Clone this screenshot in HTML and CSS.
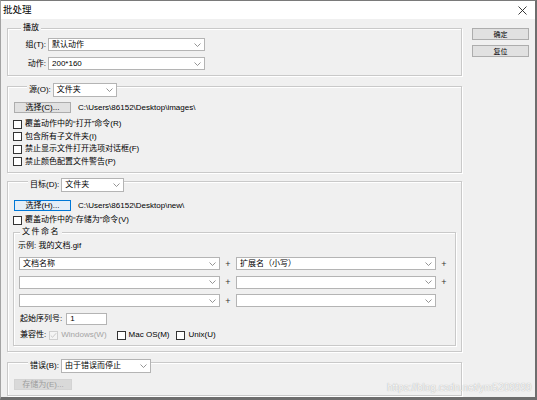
FILE: index.html
```html
<!DOCTYPE html>
<html lang="zh-CN">
<head>
<meta charset="utf-8">
<title>批处理</title>
<link rel="stylesheet" href="styles.css">
</head>
<body>
<div class="window">
  <div class="titlebar">
    <span class="title">批处理</span>
    <svg class="close" viewBox="0 0 9 9" width="9" height="9"><path d="M0.5 0.5 L8.5 8.5 M8.5 0.5 L0.5 8.5" stroke="#222" stroke-width="0.9" fill="none"/></svg>
  </div>
  <div class="body">
    <div class="main">
      <section class="group g-play">
        <div class="head head-text"><span class="legend">播放</span></div>
        <div class="frow first">
          <span class="flabel">组(T):</span>
          <div class="select w-play"><span>默认动作</span><svg class="chev" viewBox="0 0 7 4" width="7" height="4"><path d="M0.5 0.5 L3.5 3.5 L6.5 0.5" fill="none" stroke="#7a7a7a" stroke-width="0.8"/></svg></div>
        </div>
        <div class="frow second">
          <span class="flabel">动作:</span>
          <div class="select w-play"><span>200*160</span><svg class="chev" viewBox="0 0 7 4" width="7" height="4"><path d="M0.5 0.5 L3.5 3.5 L6.5 0.5" fill="none" stroke="#7a7a7a" stroke-width="0.8"/></svg></div>
        </div>
      </section>

      <section class="group g-source">
        <div class="head head-combo">
          <span class="legend">源(O):</span>
          <div class="select w-src"><span>文件夹</span><svg class="chev" viewBox="0 0 7 4" width="7" height="4"><path d="M0.5 0.5 L3.5 3.5 L6.5 0.5" fill="none" stroke="#7a7a7a" stroke-width="0.8"/></svg></div>
        </div>
        <div class="prow src-prow">
          <div class="btn">选择(C)...</div>
          <span class="path">C:\Users\86152\Desktop\images\</span>
        </div>
        <div class="checks">
          <div class="check"><span class="cb"></span><span>覆盖动作中的“打开”命令(R)</span></div>
          <div class="check"><span class="cb"></span><span>包含所有子文件夹(I)</span></div>
          <div class="check"><span class="cb"></span><span>禁止显示文件打开选项对话框(F)</span></div>
          <div class="check"><span class="cb"></span><span>禁止颜色配置文件警告(P)</span></div>
        </div>
      </section>

      <section class="group g-target">
        <div class="head head-combo">
          <span class="legend">目标(D):</span>
          <div class="select w-dst"><span>文件夹</span><svg class="chev" viewBox="0 0 7 4" width="7" height="4"><path d="M0.5 0.5 L3.5 3.5 L6.5 0.5" fill="none" stroke="#7a7a7a" stroke-width="0.8"/></svg></div>
        </div>
        <div class="prow dst-prow">
          <div class="btn focused">选择(H)...</div>
          <span class="path">C:\Users\86152\Desktop\new\</span>
        </div>
        <div class="check dst-check"><span class="cb"></span><span>覆盖动作中的“存储为”命令(V)</span></div>

        <section class="group g-naming">
          <div class="head head-text naming-head"><span class="legend spaced">文件命名</span></div>
          <div class="sample">示例: 我的文档.gif</div>
          <div class="nrow r1">
            <div class="select w-n1"><span>文档名称</span><svg class="chev" viewBox="0 0 7 4" width="7" height="4"><path d="M0.5 0.5 L3.5 3.5 L6.5 0.5" fill="none" stroke="#7a7a7a" stroke-width="0.8"/></svg></div>
            <span class="plus">+</span>
            <div class="select w-n2"><span>扩展名（小写）</span><svg class="chev" viewBox="0 0 7 4" width="7" height="4"><path d="M0.5 0.5 L3.5 3.5 L6.5 0.5" fill="none" stroke="#7a7a7a" stroke-width="0.8"/></svg></div>
            <span class="plus">+</span>
          </div>
          <div class="nrow">
            <div class="select w-n1"><span></span><svg class="chev" viewBox="0 0 7 4" width="7" height="4"><path d="M0.5 0.5 L3.5 3.5 L6.5 0.5" fill="none" stroke="#7a7a7a" stroke-width="0.8"/></svg></div>
            <span class="plus">+</span>
            <div class="select w-n2"><span></span><svg class="chev" viewBox="0 0 7 4" width="7" height="4"><path d="M0.5 0.5 L3.5 3.5 L6.5 0.5" fill="none" stroke="#7a7a7a" stroke-width="0.8"/></svg></div>
            <span class="plus">+</span>
          </div>
          <div class="nrow">
            <div class="select w-n1"><span></span><svg class="chev" viewBox="0 0 7 4" width="7" height="4"><path d="M0.5 0.5 L3.5 3.5 L6.5 0.5" fill="none" stroke="#7a7a7a" stroke-width="0.8"/></svg></div>
            <span class="plus">+</span>
            <div class="select w-n2"><span></span><svg class="chev" viewBox="0 0 7 4" width="7" height="4"><path d="M0.5 0.5 L3.5 3.5 L6.5 0.5" fill="none" stroke="#7a7a7a" stroke-width="0.8"/></svg></div>
          </div>
          <div class="seq-row">
            <span class="seq-label">起始序列号:</span>
            <div class="input">1</div>
          </div>
          <div class="compat-row">
            <span class="compat-label">兼容性:</span>
            <span class="cb disabled"><svg viewBox="0 0 9 9" width="7" height="7"><path d="M1 4.5 L3.3 6.8 L8 1.5" fill="none" stroke="#b8b8b8" stroke-width="0.9"/></svg></span>
            <span class="dim">Windows(W)</span>
            <span class="cb mac"></span><span>Mac OS(M)</span>
            <span class="cb unix"></span><span>Unix(U)</span>
          </div>
        </section>
      </section>

      <section class="group g-error">
        <div class="head head-combo">
          <span class="legend">错误(B):</span>
          <div class="select w-err"><span>由于错误而停止</span><svg class="chev" viewBox="0 0 7 4" width="7" height="4"><path d="M0.5 0.5 L3.5 3.5 L6.5 0.5" fill="none" stroke="#7a7a7a" stroke-width="0.8"/></svg></div>
        </div>
        <div class="prow err-prow">
          <div class="btn disabled-btn">存储为(E)...</div>
        </div>
      </section>
    </div>

    <div class="side">
      <div class="btn side-btn">确定</div>
      <div class="btn side-btn">复位</div>
    </div>
  </div>
  <div class="watermark">https://blog.csdn.net/ym5209999</div>
</div>
</body>
</html>
```

FILE: styles.css
```css
* { box-sizing: border-box; }

body {
  margin: 0;
  font-family: "Liberation Sans", "Noto Sans CJK SC", sans-serif;
  font-size: 8px;
  line-height: 10px;
  color: #000;
}

.window {
  position: relative;
  width: 537px;
  height: 400px;
  background: #f0f0f0;
  border-top: 1px solid #7a7a7a;
  border-left: 1px solid #a3a3a3;
  border-right: 2px solid #6e6e6e;
  border-bottom: 3px solid #6e6e6e;
}

.titlebar {
  height: 18px;
  background: #fff;
  display: flex;
  align-items: center;
  padding: 0 8px 0 2px;
}

.title {
  flex: 1;
  font-size: 9.5px;
  line-height: 12px;
}

.close { display: block; }

.body {
  display: flex;
  gap: 10px;
  padding: 9px 0 0 6px;
}

.main {
  width: 455px;
  display: flex;
  flex-direction: column;
}

.side {
  width: 57px;
  display: flex;
  flex-direction: column;
  gap: 5px;
}

/* group boxes */
.group {
  border: 1px solid #c9c9c9;
  box-shadow: 1px 1px 0 #fff, inset 1px 1px 0 #fff;
}

.g-play { height: 48px; }
.g-source { height: 87px; margin-top: 10px; }
.g-target { height: 171px; margin-top: 8px; }
.g-error { height: 34px; margin-top: 10px; }

.head {
  display: flex;
  align-items: center;
}

.head-text {
  height: 10px;
  margin: -6px 0 0 13px;
}

.head-combo {
  height: 14px;
  margin: -4px 0 0 19px;
}

.g-target > .head-combo,
.g-error > .head-combo { margin-left: 20px; }

.legend {
  align-self: stretch;
  display: flex;
  align-items: center;
  background: #f0f0f0;
  padding: 0 2px;
}

.spaced { letter-spacing: 1.5px; }

/* combo boxes */
.select {
  display: flex;
  align-items: center;
  height: 13px;
  background: #fff;
  border: 1px solid #b4b4b4;
  padding-left: 3px;
  flex: none;
  white-space: nowrap;
}

.head .select { height: 14px; }

.chev {
  display: block;
  margin-left: auto;
  margin-right: 3px;
  flex: none;
}

.w-play { width: 157px; }
.w-src { width: 64px; }
.w-dst { width: 63px; }
.w-err { width: 90px; }
.w-n1 { width: 201px; }
.w-n2 { width: 200px; }

/* play rows */
.frow {
  display: flex;
  align-items: center;
  height: 13px;
}
.frow.first { margin-top: 5px; }
.frow.second { margin-top: 6px; }

.flabel {
  width: 38px;
  margin-right: 2px;
  text-align: right;
}

/* buttons */
.btn {
  height: 11px;
  width: 57px;
  background: #e1e1e1;
  border: 1px solid #adadad;
  display: flex;
  align-items: center;
  justify-content: center;
  line-height: 9px;
  flex: none;
}

.btn.focused {
  border-color: #0078d7;
  background: #e5eef7;
}

.disabled-btn {
  width: 58px;
  background: #d9d9d9;
  border-color: #d3d3d3;
  color: #9d9d9d;
}

.side-btn {
  height: 12px;
  font-size: 7px;
}

.prow {
  display: flex;
  align-items: center;
  height: 11px;
  margin-left: 6px;
}
.src-prow { margin-top: 5px; }
.dst-prow { margin-top: 8px; }
.err-prow { margin-top: 6px; }

.path { margin-left: 7px; }

/* checkboxes */
.checks {
  display: flex;
  flex-direction: column;
  gap: 2.67px;
  margin: 6px 0 0 5px;
}

.check {
  display: flex;
  align-items: center;
  height: 10px;
}

.cb {
  width: 9px;
  height: 9px;
  border: 1px solid #333;
  background: #fff;
  margin-right: 3px;
  flex: none;
  display: flex;
  align-items: center;
  justify-content: center;
}

.cb.disabled {
  border-color: #cfcfcf;
  background: #f4f4f4;
}

.cb svg { display: block; }

.dst-check { margin: 4px 0 0 5px; }

/* naming group */
.g-naming {
  height: 114px;
  margin: 7px 5px 0 5px;
}

.naming-head { margin-left: 6px; }

.sample { margin: 4px 0 0 4px; }

.nrow {
  display: flex;
  align-items: center;
  height: 13px;
  margin: 5.67px 0 0 5px;
}
.nrow.r1 { margin-top: 6px; }

.plus {
  width: 16px;
  text-align: center;
  font-size: 9px;
  color: #333;
}

.seq-row {
  display: flex;
  align-items: center;
  height: 12px;
  margin: 5.7px 0 0 6px;
}

.seq-label { margin-right: 4px; }

.input {
  width: 41px;
  height: 12px;
  background: #fff;
  border: 1px solid #b4b4b4;
  padding-left: 3px;
  display: flex;
  align-items: center;
}

.compat-row {
  display: flex;
  align-items: center;
  height: 10px;
  margin: 5px 0 0 6px;
}

.compat-label { margin-right: 3px; }

.dim { color: #a4a4a4; }

.cb.mac { margin-left: 10px; }
.cb.unix { margin-left: 7px; }

/* watermark overlay */
.watermark {
  position: absolute;
  left: 386px;
  top: 381px;
  font-size: 10px;
  line-height: 12px;
  color: #f7f7f7;
  text-shadow: 0 0 1px #9a9a9a;
  white-space: nowrap;
}
```
